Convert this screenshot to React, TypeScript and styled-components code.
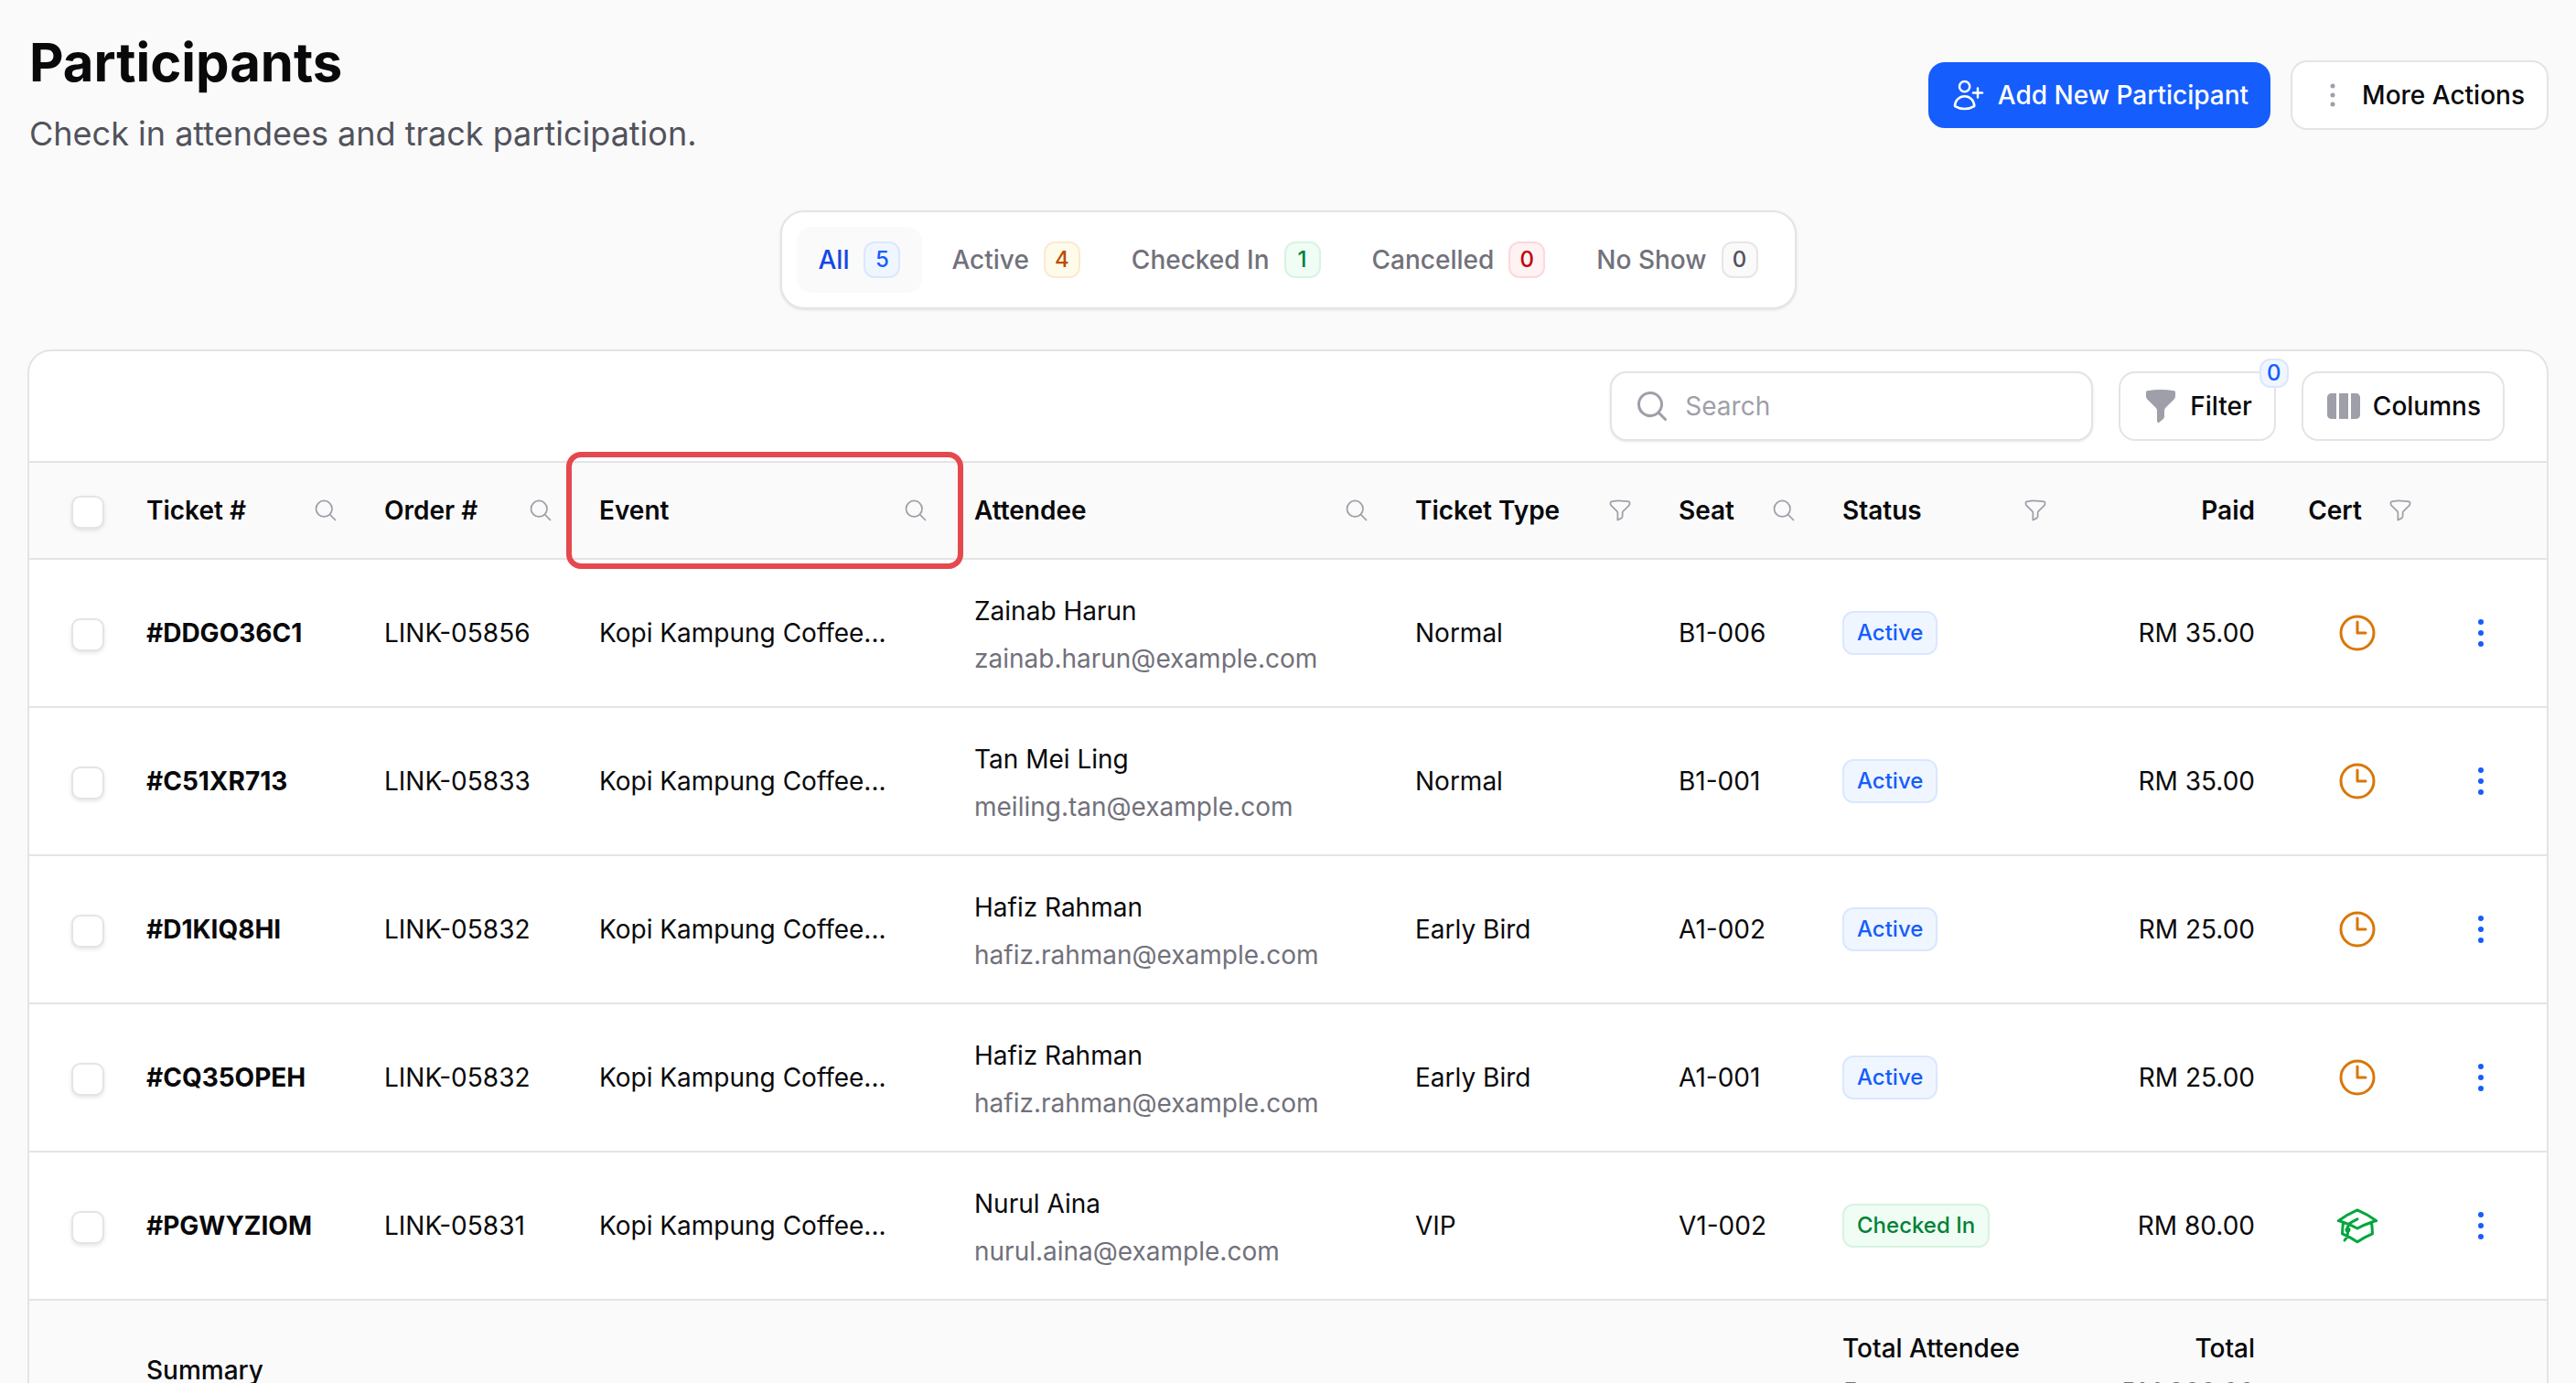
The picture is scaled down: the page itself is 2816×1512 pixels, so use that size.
import React from 'react';
import styled, { createGlobalStyle } from 'styled-components';
import {
  HiEllipsisVertical,
  HiMiniFunnel,
  HiMiniMagnifyingGlass,
  HiMiniViewColumns,
  HiOutlineAcademicCap,
  HiOutlineClock,
  HiOutlineFunnel,
  HiOutlineMagnifyingGlass,
  HiOutlineUserPlus,
} from 'react-icons/hi2';

const colors = {
  white: '#ffffff',
  page: '#fafafa',
  ink: '#09090b',
  slate: '#52525c',
  gray: '#71717b',
  silver: '#9f9fa9',
  line: '#e4e4e5',
  blue: '#155dfc',
  darkBlue: '#1447e6',
  orange: '#d97706',
  green: '#00a63e',
  highlight: '#e5484d',
};

type Tone = 'blue' | 'amber' | 'green' | 'red' | 'gray';

const tones: Record<Tone, { text: string; background: string; border: string }> = {
  blue: { text: '#155dfc', background: '#eff6ff', border: '#dbe7fe' },
  amber: { text: '#bb4d00', background: '#fffbeb', border: '#fbead0' },
  green: { text: '#008236', background: '#f0fdf4', border: '#d8f3e2' },
  red: { text: '#c10007', background: '#fef2f2', border: '#fbd9dc' },
  gray: { text: '#52525c', background: '#fafafa', border: '#e6e6e8' },
};

const GlobalStyle = createGlobalStyle`
  *, *::before, *::after {
    box-sizing: border-box;
  }

  body {
    margin: 0;
    background: ${colors.page};
    color: ${colors.ink};
    font-family: Inter, 'Liberation Sans', sans-serif;
    font-size: 28px;
    line-height: 40px;
    -webkit-font-smoothing: antialiased;
  }

  button, input {
    font: inherit;
    color: inherit;
  }

  svg {
    display: block;
    flex-shrink: 0;
  }
`;

const Page = styled.main`
  height: 100vh;
  overflow: hidden;
  padding: 32px 30px 0;
`;

const PageHeader = styled.header`
  display: flex;
  align-items: center;
  justify-content: space-between;
  margin-bottom: 54px;
`;

const Heading = styled.div`
  display: flex;
  flex-direction: column;
  gap: 16px;
  padding: 0 0 4px 2px;
`;

const Title = styled.h1`
  margin: 0;
  font-size: 58px;
  line-height: 72px;
  font-weight: 700;
`;

const Subtitle = styled.p`
  margin: 0;
  font-size: 36px;
  line-height: 52px;
  color: ${colors.slate};
`;

const HeaderActions = styled.div`
  display: flex;
  align-items: center;
  gap: 22px;
`;

const Button = styled.button<{ $primary?: boolean }>`
  position: relative;
  display: inline-flex;
  align-items: center;
  gap: 12px;
  height: ${({ $primary }) => ($primary ? 72 : 76)}px;
  padding: 0 24px;
  border: ${({ $primary }) => ($primary ? 'none' : `2px solid ${colors.line}`)};
  border-radius: 18px;
  background: ${({ $primary }) => ($primary ? colors.blue : colors.white)};
  color: ${({ $primary }) => ($primary ? colors.white : colors.ink)};
  font-weight: 500;
  white-space: nowrap;
  cursor: pointer;

  svg {
    color: ${({ $primary }) => ($primary ? colors.white : colors.silver)};
  }
`;

const Tabs = styled.nav`
  display: flex;
  gap: 8px;
  width: fit-content;
  margin: 0 auto 44px;
  padding: 16px;
  border: 2px solid ${colors.line};
  border-radius: 26px;
  background: ${colors.white};
  box-shadow: 0 1px 3px rgba(0, 0, 0, 0.1);
`;

const Tab = styled.button<{ $active: boolean }>`
  display: flex;
  align-items: center;
  gap: 16px;
  height: 72px;
  padding: 0 24px;
  border: none;
  border-radius: 16px;
  background: ${({ $active }) => ($active ? colors.page : 'transparent')};
  color: ${({ $active }) => ($active ? colors.darkBlue : colors.gray)};
  font-weight: 500;
  cursor: pointer;
`;

const CountBadge = styled.span<{ $tone: Tone }>`
  min-width: 40px;
  padding: 2px 4px;
  border: 2px solid ${({ $tone }) => tones[$tone].border};
  border-radius: 12px;
  background: ${({ $tone }) => tones[$tone].background};
  color: ${({ $tone }) => tones[$tone].text};
  font-size: 24px;
  line-height: 32px;
  font-weight: 500;
  text-align: center;
`;

const FilterCount = styled(CountBadge)`
  position: absolute;
  top: -16px;
  right: -16px;
  min-width: 32px;
  padding: 0 4px;
  line-height: 28px;
`;

const StatusBadge = styled(CountBadge)`
  display: inline-block;
  padding: 6px 14px;
  vertical-align: middle;
`;

const Panel = styled.section`
  overflow: hidden;
  border: 2px solid ${colors.line};
  border-radius: 26px;
  background: ${colors.white};
`;

const Toolbar = styled.div`
  display: flex;
  align-items: center;
  justify-content: flex-end;
  gap: 28px;
  height: 122px;
  padding: 0 46px;
  border-bottom: 2px solid ${colors.line};
`;

const SearchField = styled.label`
  display: flex;
  align-items: center;
  gap: 16px;
  width: 528px;
  height: 76px;
  padding: 0 24px;
  border: 2px solid ${colors.line};
  border-radius: 18px;
  background: ${colors.white};
  color: ${colors.silver};
  box-shadow: 0 1px 3px rgba(0, 0, 0, 0.1);
`;

const SearchInput = styled.input`
  flex: 1;
  min-width: 0;
  padding: 0;
  border: none;
  outline: none;
  background: transparent;
  color: ${colors.ink};

  &::placeholder {
    color: ${colors.silver};
    opacity: 1;
  }
`;

const Table = styled.table`
  width: 100%;
  table-layout: fixed;
  border-collapse: separate;
  border-spacing: 0;
`;

const HeadCell = styled.th<{ $width: number }>`
  position: relative;
  width: ${({ $width }) => $width}px;
  height: 106px;
  padding: 0 24px;
  border-bottom: 2px solid ${colors.line};
  background: ${colors.page};
  font-weight: 600;
  text-align: left;
  white-space: nowrap;
`;

const HeadContent = styled.div<{ $align?: 'end' | 'center' }>`
  display: flex;
  align-items: center;
  justify-content: ${({ $align }) => $align || 'space-between'};
  gap: 28px;
  padding-left: ${({ $align }) => ($align === 'center' ? 8 : 0)}px;
  padding-right: ${({ $align }) => ($align ? 0 : 2)}px;
`;

const Highlight = styled.span`
  position: absolute;
  z-index: 1;
  inset: -12px;
  border: 6px solid ${colors.highlight};
  border-radius: 16px;
  pointer-events: none;
`;

const Cell = styled.td<{ $align?: 'right' | 'center'; $strong?: boolean }>`
  height: 162px;
  padding: 0 24px;
  border-bottom: 2px solid ${colors.line};
  font-weight: ${({ $strong }) => ($strong ? 700 : 400)};
  text-align: ${({ $align }) => $align || 'left'};
  white-space: nowrap;

  > svg {
    margin: 0 auto;
  }
`;

const Attendee = styled.div`
  padding-top: 4px;
  line-height: 52px;
`;

const Email = styled.div`
  color: ${colors.gray};
`;

const Checkbox = styled.input`
  appearance: none;
  display: block;
  width: 36px;
  height: 36px;
  margin: 4px 0 0 22px;
  border: 2px solid ${colors.line};
  border-radius: 10px;
  background: ${colors.white};
  box-shadow: 0 2px 4px rgba(0, 0, 0, 0.1);
`;

const IconButton = styled.button<{ $color: string }>`
  display: block;
  padding: 0;
  border: none;
  background: none;
  color: ${({ $color }) => $color};
  cursor: pointer;
`;

const SummaryCell = styled.td<{ $align?: 'right' }>`
  padding: 28px 24px;
  background: ${colors.page};
  font-weight: 500;
  line-height: 48px;
  text-align: ${({ $align }) => $align || 'left'};
`;

const SummaryValue = styled.div`
  color: ${colors.gray};
  font-weight: 400;
`;

interface Column {
  label: string;
  width: number;
  icon?: 'search' | 'filter';
  align?: 'end' | 'center';
  highlighted?: boolean;
}

const columns: Column[] = [
  { label: 'Ticket #', width: 260, icon: 'search' },
  { label: 'Order #', width: 235, icon: 'search' },
  { label: 'Event', width: 410, icon: 'search', highlighted: true },
  { label: 'Attendee', width: 482, icon: 'search' },
  { label: 'Ticket Type', width: 288, icon: 'filter' },
  { label: 'Seat', width: 179, icon: 'search' },
  { label: 'Status', width: 275, icon: 'filter' },
  { label: 'Paid', width: 224, align: 'end' },
  { label: 'Cert', width: 175, icon: 'filter', align: 'center' },
];

interface Participant {
  ticket: string;
  order: string;
  name: string;
  email: string;
  type: string;
  seat: string;
  checkedIn: boolean;
  paid: string;
}

const participants: Participant[] = [
  { ticket: '#DDGO36C1', order: 'LINK-05856', name: 'Zainab Harun', email: 'zainab.harun@example.com', type: 'Normal', seat: 'B1-006', checkedIn: false, paid: 'RM 35.00' },
  { ticket: '#C51XR713', order: 'LINK-05833', name: 'Tan Mei Ling', email: 'meiling.tan@example.com', type: 'Normal', seat: 'B1-001', checkedIn: false, paid: 'RM 35.00' },
  { ticket: '#D1KIQ8HI', order: 'LINK-05832', name: 'Hafiz Rahman', email: 'hafiz.rahman@example.com', type: 'Early Bird', seat: 'A1-002', checkedIn: false, paid: 'RM 25.00' },
  { ticket: '#CQ35OPEH', order: 'LINK-05832', name: 'Hafiz Rahman', email: 'hafiz.rahman@example.com', type: 'Early Bird', seat: 'A1-001', checkedIn: false, paid: 'RM 25.00' },
  { ticket: '#PGWYZIOM', order: 'LINK-05831', name: 'Nurul Aina', email: 'nurul.aina@example.com', type: 'VIP', seat: 'V1-002', checkedIn: true, paid: 'RM 80.00' },
];

const tabs: { label: string; count: number; tone: Tone }[] = [
  { label: 'All', count: 5, tone: 'blue' },
  { label: 'Active', count: 4, tone: 'amber' },
  { label: 'Checked In', count: 1, tone: 'green' },
  { label: 'Cancelled', count: 0, tone: 'red' },
  { label: 'No Show', count: 0, tone: 'gray' },
];

const ColumnHeader: React.FC<Column> = ({ label, width, icon, align, highlighted }) => (
  <HeadCell $width={width} scope="col">
    <HeadContent $align={align}>
      {label}
      {icon && (
        <IconButton type="button" $color={colors.silver} aria-label={`${icon} ${label}`}>
          {icon === 'search' ? <HiOutlineMagnifyingGlass size={28} /> : <HiOutlineFunnel size={28} />}
        </IconButton>
      )}
    </HeadContent>
    {highlighted && <Highlight />}
  </HeadCell>
);

const ParticipantRow: React.FC<Participant> = ({ ticket, order, name, email, type, seat, checkedIn, paid }) => (
  <tr>
    <Cell>
      <Checkbox type="checkbox" aria-label={`Select ${ticket}`} />
    </Cell>
    <Cell $strong>{ticket}</Cell>
    <Cell>{order}</Cell>
    <Cell>Kopi Kampung Coffee...</Cell>
    <Cell>
      <Attendee>
        {name}
        <Email>{email}</Email>
      </Attendee>
    </Cell>
    <Cell>{type}</Cell>
    <Cell>{seat}</Cell>
    <Cell>
      <StatusBadge $tone={checkedIn ? 'green' : 'blue'}>{checkedIn ? 'Checked In' : 'Active'}</StatusBadge>
    </Cell>
    <Cell $align="right">{paid}</Cell>
    <Cell $align="center">
      {checkedIn ? (
        <HiOutlineAcademicCap size={48} color={colors.green} />
      ) : (
        <HiOutlineClock size={48} color={colors.orange} />
      )}
    </Cell>
    <Cell>
      <IconButton type="button" $color={colors.blue} aria-label={`Actions for ${ticket}`}>
        <HiEllipsisVertical size={48} />
      </IconButton>
    </Cell>
  </tr>
);

const App: React.FC = () => {
  const [activeTab, setActiveTab] = React.useState('All');

  return (
    <>
      <GlobalStyle />
      <Page>
        <PageHeader>
          <Heading>
            <Title>Participants</Title>
            <Subtitle>Check in attendees and track participation.</Subtitle>
          </Heading>
          <HeaderActions>
            <Button type="button" $primary>
              <HiOutlineUserPlus size={40} />
              Add New Participant
            </Button>
            <Button type="button">
              <HiEllipsisVertical size={40} />
              More Actions
            </Button>
          </HeaderActions>
        </PageHeader>

        <Tabs>
          {tabs.map(({ label, count, tone }) => (
            <Tab key={label} type="button" $active={label === activeTab} onClick={() => setActiveTab(label)}>
              {label}
              <CountBadge $tone={tone}>{count}</CountBadge>
            </Tab>
          ))}
        </Tabs>

        <Panel>
          <Toolbar>
            <SearchField>
              <HiMiniMagnifyingGlass size={40} />
              <SearchInput type="search" placeholder="Search" aria-label="Search" />
            </SearchField>
            <Button type="button">
              <HiMiniFunnel size={40} />
              Filter
              <FilterCount $tone="blue">0</FilterCount>
            </Button>
            <Button type="button">
              <HiMiniViewColumns size={40} />
              Columns
            </Button>
          </Toolbar>

          <Table>
            <thead>
              <tr>
                <HeadCell $width={104}>
                  <Checkbox type="checkbox" aria-label="Select all" />
                </HeadCell>
                {columns.map((column) => (
                  <ColumnHeader key={column.label} {...column} />
                ))}
                <HeadCell $width={120} />
              </tr>
            </thead>
            <tbody>
              {participants.map((participant) => (
                <ParticipantRow key={participant.ticket} {...participant} />
              ))}
            </tbody>
            <tfoot>
              <tr>
                <SummaryCell />
                <SummaryCell colSpan={6}>Summary</SummaryCell>
                <SummaryCell>
                  Total Attendee
                  <SummaryValue>5</SummaryValue>
                </SummaryCell>
                <SummaryCell $align="right">
                  Total
                  <SummaryValue>RM 200.00</SummaryValue>
                </SummaryCell>
                <SummaryCell colSpan={2} />
              </tr>
            </tfoot>
          </Table>
        </Panel>
      </Page>
    </>
  );
};

export default App;
